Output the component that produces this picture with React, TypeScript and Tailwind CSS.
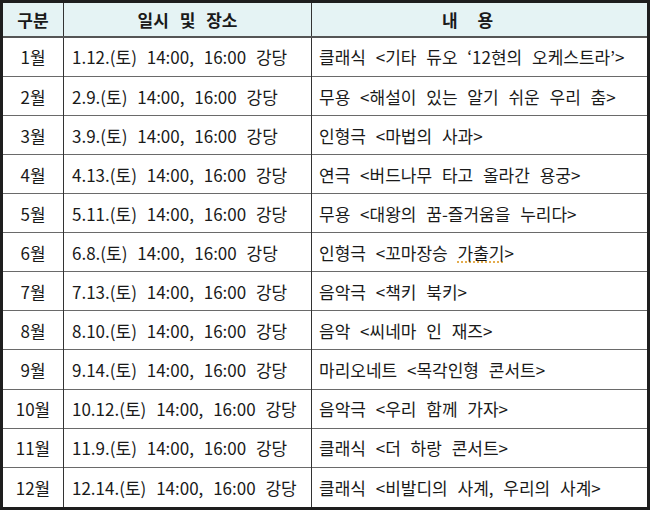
const rows = [
  { month: '1월', when: '1.12.(토) 14:00, 16:00 강당', what: "클래식 <기타 듀오 ‘12현의 오케스트라’>" },
  { month: '2월', when: '2.9.(토) 14:00, 16:00 강당', what: '무용 <해설이 있는 알기 쉬운 우리 춤>' },
  { month: '3월', when: '3.9.(토) 14:00, 16:00 강당', what: '인형극 <마법의 사과>' },
  { month: '4월', when: '4.13.(토) 14:00, 16:00 강당', what: '연극 <버드나무 타고 올라간 용궁>' },
  { month: '5월', when: '5.11.(토) 14:00, 16:00 강당', what: '무용 <대왕의 꿈-즐거움을 누리다>' },
  { month: '6월', when: '6.8.(토) 14:00, 16:00 강당', what: 'squiggle' },
  { month: '7월', when: '7.13.(토) 14:00, 16:00 강당', what: '음악극 <책키 북키>' },
  { month: '8월', when: '8.10.(토) 14:00, 16:00 강당', what: '음악 <씨네마 인 재즈>' },
  { month: '9월', when: '9.14.(토) 14:00, 16:00 강당', what: '마리오네트 <목각인형 콘서트>' },
  { month: '10월', when: '10.12.(토) 14:00, 16:00 강당', what: '음악극 <우리 함께 가자>' },
  { month: '11월', when: '11.9.(토) 14:00, 16:00 강당', what: '클래식 <더 하랑 콘서트>' },
  { month: '12월', when: '12.14.(토) 14:00, 16:00 강당', what: '클래식 <비발디의 사계, 우리의 사계>' },
]

export default function App() {
  return (
    <div
      className="w-[650px] h-[510px] bg-white text-[#1a1a1a] overflow-hidden"
      style={{ fontFamily: '"Noto Sans CJK KR", "Noto Sans", sans-serif' }}
    >
      <table className="w-[650px] h-[510px] border-collapse border-[3px] border-[#1e1e1e] table-fixed text-[17px] leading-none">
        <colgroup>
          <col className="w-[62px]" />
          <col className="w-[248px]" />
          <col />
        </colgroup>
        <thead>
          <tr className="h-[35px] bg-[#e5f3f4] border-b-2 border-[#555]">
            <th className="border-r border-[#333] font-bold text-center">구분</th>
            <th className="border-r border-[#333] font-bold text-center [word-spacing:7px]">일시 및 장소</th>
            <th className="font-bold text-center pr-[24px] [word-spacing:16px]">내 용</th>
          </tr>
        </thead>
        <tbody>
          {rows.map((r) => (
            <tr key={r.month} className="border-b border-[#6a6a6a]">
              <td className="border-r border-[#333] text-center">{r.month}</td>
              <td className="border-r border-[#333] pl-[8px] whitespace-nowrap [word-spacing:6px]">
                {r.when}
              </td>
              <td className="pl-[7px] whitespace-nowrap [word-spacing:6px]">
                {r.what === 'squiggle' ? (
                  <>
                    {'인형극 <꼬마장승 '}
                    <span className="underline decoration-dotted decoration-[#e0a030] underline-offset-2">가출기</span>
                    {'>'}
                  </>
                ) : (
                  r.what
                )}
              </td>
            </tr>
          ))}
        </tbody>
      </table>
    </div>
  )
}
